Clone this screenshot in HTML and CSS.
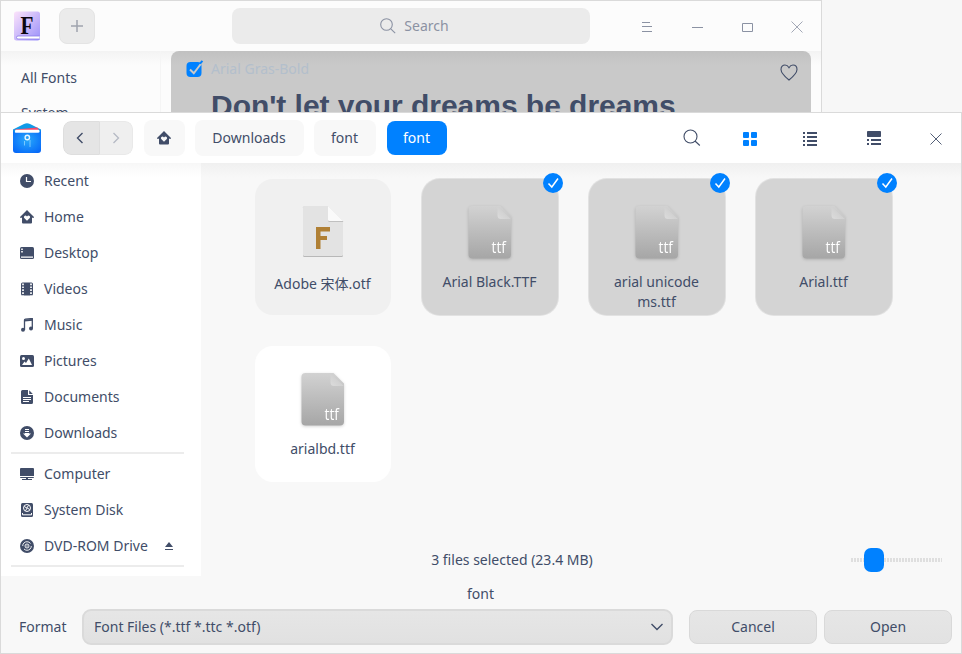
FILE: index.html
```html
<!DOCTYPE html>
<html lang="en">
<head>
<meta charset="utf-8">
<title>Font Manager</title>
<link rel="stylesheet" href="styles.css">
</head>
<body>
<svg class="defs" width="0" height="0" aria-hidden="true">
  <defs>
    <linearGradient id="page" x1="0" y1="0" x2="0" y2="1"><stop offset="0" stop-color="#d2d2d2"/><stop offset="1" stop-color="#a6a6a6"/></linearGradient>
    <linearGradient id="fold" x1="0" y1="1" x2="1" y2="0"><stop offset="0" stop-color="#dcdcdc"/><stop offset="1" stop-color="#c6c6c6"/></linearGradient>
    <linearGradient id="book" x1="0" y1="0" x2="1" y2="1"><stop offset="0" stop-color="#fce3fa"/><stop offset="1" stop-color="#9a90fa"/></linearGradient>
    <radialGradient id="bag" cx=".5" cy=".45" r=".7"><stop offset="0" stop-color="#27a8fb"/><stop offset="1" stop-color="#0565f8"/></radialGradient>
    <symbol id="home" viewBox="0 0 14 14"><path fill="currentColor" fill-rule="evenodd" d="M7 0 14 7v.8h-2V12.500q0 1-1 1H3q-1 0-1-1V7.800H0V7zM7 10.800 9.800 8q.8-1.200-.2-2.100Q8.200 5 7 6.400 5.800 5 4.400 5.900q-1 .9-.2 2.100z"/></symbol>
    <symbol id="ttf" viewBox="0 0 48 60">
      <path d="M6 3h28.500L45 13.500v38a4 4 0 0 1-4 4H6.500a4 4 0 0 1-4-4V7A4 4 0 0 1 6.500 3z" fill="url(#page)"/>
      <path d="M31.500 3.300 44.800 16H35q-3.500 0-3.500-3.500z" fill="url(#fold)"/>
    </symbol>
  </defs>
</svg>

<div class="window manager">
  <header class="titlebar">
    <svg class="app-logo" width="28" height="32" viewBox="0 0 28 32">
      <rect x="1" y="1.500" width="26" height="29" rx="2.500" fill="url(#book)"/>
      <path d="M26.500 26H5q-1.500 0-1.500 1.500T5 29h21.500" fill="#fff" stroke="#8a7be8" stroke-width=".8"/>
      <text x="14" y="23.500" text-anchor="middle" textLength="13" lengthAdjust="spacingAndGlyphs" class="logo-letter">F</text>
    </svg>
    <button class="add"><svg width="12" height="12" viewBox="0 0 12 12"><path d="M6 0v12M0 6h12" stroke="#a0a4ae" stroke-width="1.500"/></svg></button>
    <div class="search">
      <svg width="16" height="16" viewBox="0 0 16 16" fill="none" stroke="#8b92a3" stroke-width="1.100"><circle cx="6.500" cy="6.500" r="5.800"/><path d="m10.800 10.800 4.400 4.400"/></svg>
      <span>Search</span>
    </div>
    <div class="controls">
      <svg width="12" height="12" viewBox="0 0 12 12" stroke="#8b92a3"><path d="M1 1.500h8M1 5.500h10M1 10.500h10"/></svg>
      <svg width="12" height="12" viewBox="0 0 12 12" stroke="#8b92a3"><path d="M1 6.500h11"/></svg>
      <svg width="12" height="12" viewBox="0 0 12 12" stroke="#8b92a3" fill="none"><path d="M1.500 2.500h10v8h-10z"/></svg>
      <svg width="12" height="12" viewBox="0 0 12 12" stroke="#8b92a3" stroke-width=".8"><path d="m.5.500 11 11m0-11-11 11"/></svg>
    </div>
  </header>
  <div class="manager-body">
    <nav class="categories"><span>All Fonts</span><span>System</span></nav>
    <div class="preview-area">
      <article class="preview">
        <div class="preview-head">
          <svg width="18" height="18" viewBox="0 0 18 18"><rect x=".5" y="2" width="15" height="15" rx="4" fill="#0081ff"/><path d="m4 9.500 3.800 3.800L14.800 4" fill="none" stroke="#c9c9c9" stroke-width="2"/><path d="m14 3.600 2.400-2.800" fill="none" stroke="#0081ff" stroke-width="2"/></svg>
          <span>Arial Gras-Bold</span>
          <svg class="heart" width="18" height="17" viewBox="0 0 18 17" fill="none" stroke="#414d68" stroke-width="1.100"><path d="M9 16Q1 9.300 1 5.400C1 2.700 2.800 1 5 1c1.900 0 3 .9 4 2.700C10 1.900 11.100 1 13 1c2.200 0 4 1.700 4 4.400Q17 9.300 9 16z"/></svg>
        </div>
        <h1>Don't let your dreams be dreams</h1>
      </article>
    </div>
  </div>
</div>

<div class="window dialog">
  <header class="toolbar">
    <svg class="files-logo" width="30" height="32" viewBox="0 0 30 32">
      <path d="M1 7.500 12 2q3-1.400 6 0l11 5.500V12H1z" fill="#109be8"/>
      <path d="m3 7.500 22.500-2 1.500 3H3z" fill="#f4496a"/>
      <path d="M3 9q0-1.200 1.500-1.200H26q1.500 0 1.500 1.200v4H3z" fill="#fff"/>
      <path d="M1 7.500Q1.500 10.700 4 10.700h22q2.500 0 3-3.200V28q0 3-3 3H4q-3 0-3-3z" fill="url(#bag)"/>
      <circle cx="15.300" cy="15.500" r="2.200" fill="none" stroke="#e4f6ff" stroke-width="1.400"/>
      <path d="M12.500 19v4.500M18 18v7" stroke="#9ddcff" stroke-opacity=".7"/>
    </svg>
    <div class="history">
      <button><svg width="8" height="12" viewBox="0 0 8 12" fill="none" stroke="#414d68" stroke-width="1.400"><path d="M6.500 1 1.500 6l5 5"/></svg></button>
      <button class="off"><svg width="8" height="12" viewBox="0 0 8 12" fill="none" stroke="#b5b9c4" stroke-width="1.300"><path d="m1.500 1 5 5-5 5"/></svg></button>
    </div>
    <div class="crumbs">
      <span class="crumb crumb-home"><svg width="14" height="14"><use href="#home"/></svg></span>
      <span class="crumb crumb-downloads">Downloads</span>
      <span class="crumb crumb-font">font</span>
      <span class="crumb current">font</span>
    </div>
    <div class="tools">
      <svg width="18" height="18" viewBox="0 0 18 18" fill="none" stroke="#414d68" stroke-width="1.100"><circle cx="7.500" cy="7.500" r="6.500"/><path d="m12 12 4.800 4.500"/></svg>
      <svg class="grid-view" width="14" height="14" viewBox="0 0 14 14" fill="#0081ff"><rect width="6" height="6" rx="1"/><rect x="8" width="6" height="6" rx="1"/><rect y="8" width="6" height="6" rx="1"/><rect x="8" y="8" width="6" height="6" rx="1"/></svg>
      <svg class="list-view" width="14" height="14" viewBox="0 0 14 14" stroke="#414d68" stroke-width="2"><path d="M0 1h2m2 0h10M0 5h2m2 0h10M0 9h2m2 0h10M0 13h2m2 0h10"/></svg>
      <svg class="detail-view" width="14" height="14" viewBox="0 0 14 14"><rect width="14" height="6" rx=".8" fill="#414d68"/><path d="M0 9h2m2 0h10M0 13h2m2 0h10" stroke="#414d68" stroke-width="2"/></svg>
      <svg class="close" width="12" height="12" viewBox="0 0 12 12" stroke="#414d68" stroke-width=".9"><path d="m.5.500 11 11m0-11-11 11"/></svg>
    </div>
  </header>

  <div class="browser">
    <nav class="places">
      <a><svg width="14" height="14" viewBox="0 0 14 14"><circle cx="7" cy="7" r="7" fill="#414d68"/><path d="M6.500 3v4.500H11" fill="none" stroke="#fff" stroke-width="1.200"/></svg>Recent</a>
      <a><svg width="14" height="14"><use href="#home"/></svg>Home</a>
      <a><svg width="14" height="14" viewBox="0 0 14 14"><rect y="1" width="14" height="12" rx="1.500" fill="#414d68"/><path d="M1 10.500h12v1.300H1zM1.200 2.500h1.600V4H1.200zm0 2.600h1.600v1.500H1.200z" fill="#fff"/></svg>Desktop</a>
      <a><svg width="14" height="14" viewBox="0 0 14 14"><rect x="1" y=".5" width="12" height="13" rx="1.500" fill="#414d68"/><path d="M3 1.500v12M11 1.500v12" stroke="#fff" stroke-width="1.700" stroke-dasharray="1.700 1.200"/></svg>Videos</a>
      <a><svg width="14" height="14" viewBox="0 0 14 14"><path d="M4.500 12V2q0-.8 1-.9l6.800-.6v10" fill="none" stroke="#414d68" stroke-width="1.300"/><path d="M4.500 1.500 12.800 1v1.800l-8.300.6z" fill="#414d68"/><circle cx="3" cy="11.800" r="2" fill="#414d68"/><circle cx="11" cy="10.500" r="2" fill="#414d68"/></svg>Music</a>
      <a><svg width="14" height="14" viewBox="0 0 14 14"><rect y="1" width="14" height="12" rx="1.500" fill="#414d68"/><circle cx="3.500" cy="4.500" r="1.500" fill="#fff"/><path d="m2 11 2.500-3.500L6 9l2.800-4.500L12 11z" fill="#fff"/></svg>Pictures</a>
      <a><svg width="14" height="14" viewBox="0 0 14 14"><path d="M2.500 0H8v4.500q0 .5.500.5H13v7.500q0 1.500-1.500 1.500h-9Q1 14 1 12.500v-11Q1 0 2.500 0zM9.200.2 12.800 4H9.200z" fill="#414d68"/><path d="M3 7.500h8M3 9.500h8M3 11.500h6" stroke="#fff"/></svg>Documents</a>
      <a><svg width="14" height="14" viewBox="0 0 14 14"><circle cx="7" cy="7" r="7" fill="#414d68"/><path d="M5 3h4v1H5zm0 2h4v1H5zm0 2h4v.5h2L7 11.500 3 7.500h2z" fill="#fff"/></svg>Downloads</a>
      <hr>
      <a><svg width="14" height="14" viewBox="0 0 14 14" fill="#414d68"><path d="M1 1h12q1 0 1 1v7H0V2q0-1 1-1zM0 10h14v.2q0 .8-1 .8H1q-1 0-1-.8zM6 11h2v1h4v1H2v-1h4z"/></svg>Computer</a>
      <a><svg width="14" height="14" viewBox="0 0 14 14"><rect x="1" width="12" height="14" rx="1.500" fill="#414d68"/><circle cx="7" cy="5" r="3.500" fill="none" stroke="#fff"/><path d="M7 5Q5 5 4.500 3M7 5q2 0 2.500 2M7 5q0-2 2-2.500M7 5q0 2-2 2.500" fill="none" stroke="#fff" stroke-width=".9"/><path d="M2.500 10v1.800h9V10" fill="none" stroke="#fff"/></svg>System Disk</a>
      <a><svg width="14" height="14" viewBox="0 0 14 14"><circle cx="7" cy="7" r="7" fill="#414d68"/><g fill="none" stroke="#fff" stroke-width=".9"><circle cx="7" cy="7" r="2"/><path d="M2.700 7A4.300 4.300 0 0 1 7 2.700 4.300 4.300 0 0 1 10.500 4.500M11.300 7A4.300 4.300 0 0 1 7 11.300 4.300 4.300 0 0 1 4 10"/></g><circle cx="7" cy="7" r=".7" fill="#fff"/></svg>DVD-ROM Drive
        <svg class="eject" width="8" height="8" viewBox="0 0 8 8" fill="#414d68"><path d="m4 0 4 5H0zM0 7h8v1H0z"/></svg></a>
      <hr>
    </nav>
    <main class="content">
      <div class="files">
        <div class="file muted">
          <svg width="42" height="54" viewBox="0 0 42 54"><path d="M2.500 1.500H26L41 16.500v34q0 1.500-1.500 1.500h-37Q1 52 1 50.500v-48Q1 1.500 2.500 1.500z" fill="#b8b8b8"/><path d="M2.500 1H26l15 15v33.500q0 1.500-1.500 1.500h-37Q1 51 1 49.500v-47Q1 1 2.500 1z" fill="#e3e3e3"/><path d="M26 15.500q0 1.200 1.500 1.200H41V16z" fill="#b5b5b5"/><path d="M26 1 41 16H27.500q-1.500 0-1.500-1.500z" fill="#fafafa"/><path d="M14 22h14v4.500H18.500V31H25v4h-6.500v9H14z" fill="#b08035"/></svg>
          <span>Adobe 宋体.otf</span>
        </div>
        <div class="file selected">
          <div class="icon"><svg width="48" height="60"><use href="#ttf"/></svg><b>ttf</b></div>
          <span>Arial Black.TTF</span><svg class="check" width="20" height="20" viewBox="0 0 20 20"><circle cx="10" cy="10" r="10" fill="#0081ff"/><path d="m5.500 10.500 3.300 3.500 6.200-8.500" fill="none" stroke="#fff" stroke-width="1.500"/></svg>
        </div>
        <div class="file selected">
          <div class="icon"><svg width="48" height="60"><use href="#ttf"/></svg><b>ttf</b></div>
          <span>arial unicode ms.ttf</span><svg class="check" width="20" height="20" viewBox="0 0 20 20"><circle cx="10" cy="10" r="10" fill="#0081ff"/><path d="m5.500 10.500 3.300 3.500 6.200-8.500" fill="none" stroke="#fff" stroke-width="1.500"/></svg>
        </div>
        <div class="file selected">
          <div class="icon"><svg width="48" height="60"><use href="#ttf"/></svg><b>ttf</b></div>
          <span>Arial.ttf</span><svg class="check" width="20" height="20" viewBox="0 0 20 20"><circle cx="10" cy="10" r="10" fill="#0081ff"/><path d="m5.500 10.500 3.300 3.500 6.200-8.500" fill="none" stroke="#fff" stroke-width="1.500"/></svg>
        </div>
        <div class="file">
          <div class="icon"><svg width="48" height="60"><use href="#ttf"/></svg><b>ttf</b></div>
          <span>arialbd.ttf</span>
        </div>
      </div>
      <div class="status">
        <span>3 files selected (23.4 MB)</span>
        <div class="slider"><i class="thumb"></i></div>
      </div>
    </main>
  </div>

  <div class="folder-name">font</div>
  <footer class="actions">
    <label>Format</label>
    <div class="select"><span>Font Files (*.ttf *.ttc *.otf)</span><svg width="14" height="8" viewBox="0 0 14 8" fill="none" stroke="#414d68" stroke-width="1.400"><path d="m1.500 1 5.500 5.500L12.500 1"/></svg></div>
    <button class="cancel">Cancel</button>
    <button>Open</button>
  </footer>
</div>
</body>
</html>
```
FILE: styles.css
```css
* { box-sizing: border-box; }
body {
  margin: 0;
  height: 654px;
  position: relative;
  overflow: hidden;
  background: #f7f7f7;
  color: #414d68;
  font: 14px/20px "Noto Sans", "Noto Sans CJK SC", sans-serif;
}
svg { display: block; flex: none; }
button { font: inherit; color: inherit; padding: 0; }
.defs { position: absolute; }
.window { position: absolute; left: 0; border: 1px solid #dadada; }

/* Font manager window */
.manager { top: 0; width: 822px; height: 660px; background: #fcfcfc; }
.titlebar { height: 50px; display: flex; align-items: center; padding-left: 12px; }
.logo-letter { font: bold 26px "Liberation Serif", serif; fill: #0b0710; }
.add {
  width: 36px; height: 36px; margin-left: 18px;
  display: grid; place-items: center;
  background: #ebebeb; border: 1px solid #e4e4e4; border-radius: 8px;
}
.search {
  width: 358px; height: 36px; margin-left: 137px;
  display: flex; align-items: center; justify-content: center; gap: 8px;
  padding-left: 7px; border-radius: 8px;
  background: #ebebeb; color: #8b92a3;
}
.controls { display: flex; gap: 38px; margin-left: 51px; padding-top: 1px; }
.manager-body {
  display: flex; height: 600px;
  background: linear-gradient(#f3f3f3, #fcfcfc 14px);
}
.categories {
  width: 160px; padding: 17px 0 0 20px;
  display: flex; flex-direction: column; gap: 15px;
  border-right: 1px solid #f5f5f5;
}
.preview-area { flex: 1; padding: 0 10px; }
.preview {
  height: 160px; border-radius: 8px;
  background: linear-gradient(#c1c1c1, #c9c9c9 14px);
}
.preview-head { display: flex; align-items: center; height: 36px; padding: 0 13px 0 15px; color: #b3bfcc; }
.preview-head span { flex: 1; padding-left: 7px; }
.heart { margin-top: 7px; }
.preview h1 { margin: 1px 0 0 40px; font: bold 30px/36px "Liberation Sans", sans-serif; letter-spacing: -.03px; }

/* File dialog */
.dialog { top: 112px; width: 962px; height: 542px; background: #f8f8f8; }
.toolbar { height: 50px; display: flex; align-items: center; padding-left: 11px; background: #fff; }
.history { display: flex; width: 70px; height: 34px; margin-left: 21px; border-radius: 8px; overflow: hidden; }
.history button {
  flex: 1; display: grid; place-items: center; padding-right: 2px;
  background: #e5e5e5; border: 1px solid #dedede; border-radius: 8px 0 0 8px;
}
.history .off { padding-right: 0; background: #efefef; border-color: #e9e9e9; border-left: 0; border-radius: 0 8px 8px 0; }
.history .off svg { margin-left: 1px; }
.crumbs { display: flex; align-items: center; gap: 10px; margin-left: 11px; }
.crumb { height: 36px; display: grid; place-items: center; padding-right: 1px; border-radius: 8px; background: #f8f8f8; }
.crumb-home { width: 41px; }
.crumb-downloads { width: 109px; }
.crumb-font { width: 62px; }
.current { width: 60px; height: 34px; margin-left: 1px; background: #0081ff; color: #fff; }
.tools { display: flex; align-items: center; margin-left: 236px; }
.grid-view { margin: 2px 0 0 42px; }
.list-view { margin: 2px 0 0 46px; }
.detail-view { margin-left: 50px; }
.close { margin: 1px 0 0 49px; }

.browser { display: flex; height: 413px; }
.places { width: 200px; background: linear-gradient(#f7f7f7, #fff 14px); }
.places a { display: flex; align-items: center; height: 36px; padding-left: 19px; gap: 10px; white-space: nowrap; }
.places hr { width: 173px; height: 2px; margin: 1px 0 2px 10px; border: 0; background: #ececec; }
.eject { margin-left: 7px; }
.content {
  flex: 1; display: flex; flex-direction: column;
  background: linear-gradient(#f0f0f0, #f8f8f8 15px);
}
.files { display: grid; grid-template-columns: repeat(4, 136px); grid-auto-rows: 136px; gap: 31px; padding: 16px 0 0 54px; height: 384px; align-content: start; }
.file {
  position: relative; display: flex; flex-direction: column; align-items: center;
  padding-top: 24px; border-radius: 18px; background: #fff; text-align: center;
}
.file > span { width: 110px; margin: 9px 0 0 -1px; }
.muted { background: #f0f0f0; padding-top: 26px; }
.muted > span { margin-top: 15px; }
.selected { background: #d4d4d4; box-shadow: 0 0 0 1px #e2e2e2; }
.icon { position: relative; filter: drop-shadow(0 1px 1.500px rgba(0, 0, 0, .18)); }
.icon b { position: absolute; right: 8px; bottom: 6px; color: #fff; font: 400 17px/20px "Open Sans", sans-serif; transform: scaleX(.8); transform-origin: right; }
.check { position: absolute; right: -5px; top: -6px; }
.status { position: relative; display: flex; align-items: center; justify-content: center; height: 26px; padding-right: 138px; }
.slider {
  position: absolute; right: 19px; top: 11px; width: 91px; height: 4px;
  background: repeating-linear-gradient(90deg, #dfdfdf 0 2px, transparent 2px 3px);
}
.thumb { position: absolute; left: 13px; top: -10px; width: 20px; height: 24px; border-radius: 7px; background: #0081ff; }
.folder-name { margin-top: 8px; text-align: center; padding-right: 1px; }
.actions { display: flex; align-items: center; height: 46px; padding: 0 9px 0 18px; }
.select {
  width: 591px; height: 36px; margin: 0 16px 0 auto; padding: 0 7px 0 10px;
  display: flex; align-items: center; justify-content: space-between;
  border: 2px solid #dadada; border-radius: 9px;
  background: linear-gradient(#e6e6e6, #e1e1e1);
}
.actions button {
  width: 128px; height: 34px; border: 1px solid #d9d9d9; border-radius: 8px;
  background: linear-gradient(#e6e6e6, #e2e2e2);
}
.actions .cancel { margin-right: 7px; }
```
